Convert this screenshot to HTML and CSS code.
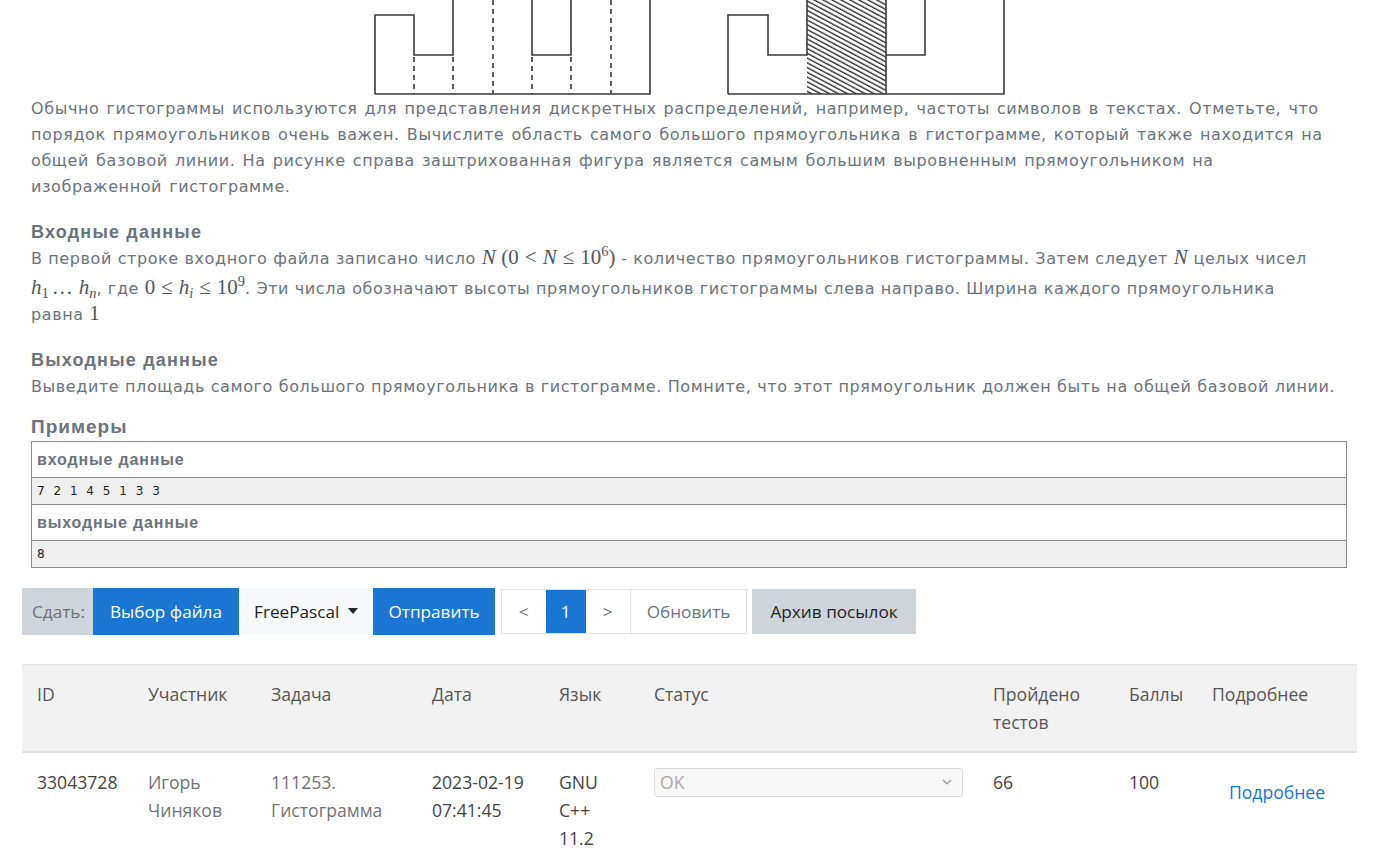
FILE: index.html
```html
<!DOCTYPE html>
<html lang="ru">
<head>
<meta charset="utf-8">
<title>Гистограмма</title>
<link rel="stylesheet" href="styles.css">
</head>
<body>
<div class="page">
  <div class="statement">
    <div class="figure">
      <svg width="640" height="96" viewBox="0 0 640 96" xmlns="http://www.w3.org/2000/svg">
        <defs>
          <pattern id="hatch" width="8" height="4.2" patternUnits="userSpaceOnUse" patternTransform="rotate(28)">
            <line x1="0" y1="1" x2="8" y2="1" stroke="#222" stroke-width="1.3"/>
          </pattern>
        </defs>
        <g fill="none" stroke="#3a3a3a" stroke-width="1.6">
          <path d="M6 94 V15 H45 V55 H84 V0"/>
          <path d="M163 0 V55 H202 V0"/>
          <path d="M281 0 V94 H6"/>
          <g stroke-dasharray="5 4">
            <path d="M45 57 V94"/>
            <path d="M84 57 V94"/>
            <path d="M124 0 V94"/>
            <path d="M163 57 V94"/>
            <path d="M202 57 V94"/>
            <path d="M242 0 V94"/>
          </g>
        </g>
        <rect x="438" y="0" width="79" height="94" fill="url(#hatch)"/>
        <g fill="none" stroke="#3a3a3a" stroke-width="1.6">
          <path d="M359 94 V15 H399 V55 H438 V0"/>
          <path d="M517 94 V0"/>
          <path d="M517 55 H556 V0"/>
          <path d="M635 0 V94 H359"/>
        </g>
      </svg>
    </div>

    <p class="legend">Обычно гистограммы используются для представления дискретных распределений, например, частоты символов в текстах. Отметьте, что порядок прямоугольников очень важен. Вычислите область самого большого прямоугольника в гистограмме, который также находится на общей базовой линии. На рисунке справа заштрихованная фигура является самым большим выровненным прямоугольником на изображенной гистограмме.</p>

    <h3 class="sec-title">Входные данные</h3>
    <p class="sec-text">В первой строке входного файла записано число <span class="m"><i>N</i></span> <span class="m">(0<span class="rel">&lt;</span><i>N</i><span class="rel">≤</span>10<sup>6</sup>)</span> - количество прямоугольников гистограммы. Затем следует <span class="m"><i>N</i></span> целых чисел <span class="m tall"><i>h</i><sub>1</sub><span class="dots">…</span><i>h</i><sub><i>n</i></sub></span>, где <span class="m">0<span class="rel">≤</span><i>h</i><sub><i>i</i></sub><span class="rel">≤</span>10<sup>9</sup></span>. Эти числа обозначают высоты прямоугольников гистограммы слева направо. Ширина каждого прямоугольника равна&nbsp;<span class="m">1</span></p>

    <h3 class="sec-title">Выходные данные</h3>
    <p class="sec-text">Выведите площадь самого большого прямоугольника в гистограмме. Помните, что этот прямоугольник должен быть на общей базовой линии.</p>

    <h3 class="examples-title">Примеры</h3>
    <div class="sample">
      <div class="sample-head">входные данные</div>
      <div class="sample-data">7 2 1 4 5 1 3 3</div>
      <div class="sample-head">выходные данные</div>
      <div class="sample-data last">8</div>
    </div>
  </div>

  <div class="submit-bar">
    <span class="bar-label">Сдать:</span>
    <span class="btn btn-blue btn-file">Выбор файла</span>
    <span class="btn btn-light">FreePascal <span class="caret"></span></span>
    <span class="btn btn-blue">Отправить</span>
    <div class="pager">
      <span class="pg">&lt;</span>
      <span class="pg pg-active">1</span>
      <span class="pg">&gt;</span>
      <span class="pg pg-refresh">Обновить</span>
    </div>
    <span class="btn btn-grey">Архив посылок</span>
  </div>

  <table class="runs">
    <colgroup>
      <col class="c-id"><col class="c-user"><col class="c-task"><col class="c-date"><col class="c-lang"><col class="c-status"><col class="c-tests"><col class="c-score"><col class="c-more">
    </colgroup>
    <thead>
      <tr>
        <th>ID</th>
        <th>Участник</th>
        <th>Задача</th>
        <th>Дата</th>
        <th>Язык</th>
        <th>Статус</th>
        <th>Пройдено тестов</th>
        <th>Баллы</th>
        <th>Подробнее</th>
      </tr>
    </thead>
    <tbody>
      <tr>
        <td>33043728</td>
        <td class="muted">Игорь Чиняков</td>
        <td class="muted">111253. Гистограмма</td>
        <td>2023-02-19 07:41:45</td>
        <td>GNU C++ 11.2</td>
        <td>
          <div class="status-select">
            <span>OK</span>
            <svg width="10" height="6" viewBox="0 0 10 6"><path d="M1 1 L5 5 L9 1" fill="none" stroke="#999" stroke-width="1.2"/></svg>
          </div>
        </td>
        <td>66</td>
        <td>100</td>
        <td class="more"><a href="#">Подробнее</a></td>
      </tr>
    </tbody>
  </table>
</div>
</body>
</html>
```

FILE: styles.css
```css
* { box-sizing: border-box; }

body {
  margin: 0;
  background: #fff;
}

.page {
  padding: 0 19px 40px 22px;
}

.statement {
  padding: 0 10px 0 9px;
}

.figure {
  display: flex;
  justify-content: center;
  height: 96px;
}

.figure svg {
  display: block;
}

.legend,
.sec-text {
  margin: 0;
  font-family: "DejaVu Sans", Verdana, sans-serif;
  font-size: 16px;
  line-height: 26px;
  letter-spacing: 0.6px;
  color: #6c737b;
}

.legend {
  word-spacing: 1.4px;
}

.m {
  font-family: "Liberation Serif", "DejaVu Serif", serif;
  font-size: 21px;
  line-height: 0;
  letter-spacing: 0;
  white-space: nowrap;
  color: #4f565e;
}

.m i {
  font-style: italic;
}

.m .rel {
  margin: 0 6px;
}

.m .dots {
  margin: 0 4px 0 3px;
  letter-spacing: 2px;
}

.m sup {
  font-size: 14.5px;
  vertical-align: 8px;
  line-height: 0;
}

.m sub {
  font-size: 14.5px;
  vertical-align: -4px;
  line-height: 0;
}

.m.tall {
  display: inline-block;
  line-height: 26px;
  padding-top: 1.5px;
}

.sec-title {
  margin: 21px 0 3px;
  font-family: "Liberation Sans", Arial, sans-serif;
  font-size: 18px;
  line-height: 22px;
  letter-spacing: 1.2px;
  font-weight: bold;
  color: #6c737b;
}

.examples-title {
  margin: 15px 0 2px;
  font-family: "Liberation Sans", Arial, sans-serif;
  font-size: 19px;
  line-height: 24px;
  letter-spacing: 1px;
  font-weight: bold;
  color: #6c737b;
}

.sample {
  border: 1px solid #8c8c8c;
}

.sample-head {
  height: 36px;
  padding: 0 5px;
  line-height: 35px;
  font-family: "Liberation Sans", Arial, sans-serif;
  font-size: 16px;
  letter-spacing: 0.85px;
  font-weight: bold;
  color: #6c737b;
  border-bottom: 1px solid #8c8c8c;
  background: #fff;
}

.sample-data {
  height: 27px;
  padding: 0 5px;
  line-height: 26px;
  font-family: "DejaVu Sans", Verdana, sans-serif;
  font-size: 12px;
  word-spacing: 5px;
  color: #222;
  background: #efefef;
  border-bottom: 1px solid #8c8c8c;
}

.sample-data.last {
  height: 26px;
  border-bottom: none;
}

/* submit bar */
.submit-bar {
  display: flex;
  align-items: center;
  margin-top: 20px;
  height: 47px;
  font-family: "Open Sans", "Noto Sans", sans-serif;
  font-size: 17.2px;
}

.bar-label {
  display: flex;
  align-items: center;
  height: 47px;
  padding: 0 8px 0 10px;
  background: #ced4da;
  color: #6c757d;
}

.btn {
  display: flex;
  align-items: center;
  height: 47px;
  padding: 0 15px;
  white-space: nowrap;
}

.btn-file {
  padding: 0 17px;
}

.btn-blue {
  background: #1976d2;
  color: #fff;
}

.btn-light {
  background: #f8f9fa;
  color: #212529;
}

.caret {
  display: inline-block;
  margin-left: 9px;
  border-top: 6px solid #212529;
  border-left: 5px solid transparent;
  border-right: 5px solid transparent;
}

.pager {
  display: flex;
  height: 45px;
  margin-left: 6px;
  border: 1px solid #dee2e6;
}

.pg {
  display: flex;
  align-items: center;
  justify-content: center;
  width: 44px;
  color: #6c757d;
  background: #fff;
}

.pg-active {
  width: 40px;
  background: #1976d2;
  color: #fff;
}

.pg-refresh {
  width: auto;
  padding: 0 16px;
  border-left: 1px solid #dee2e6;
}

.btn-grey {
  height: 45px;
  margin-left: 5px;
  padding: 0 18px;
  background: #ced4da;
  color: #212529;
}

/* runs table */
.runs {
  width: 100%;
  margin-top: 29px;
  border-collapse: collapse;
  table-layout: fixed;
  font-family: "Open Sans", "Noto Sans", sans-serif;
  font-size: 17.6px;
  line-height: 28px;
  color: #444;
}

.c-id { width: 111px; }
.c-user { width: 123px; }
.c-task { width: 161px; }
.c-date { width: 127px; }
.c-lang { width: 95px; }
.c-status { width: 339px; }
.c-tests { width: 136px; }
.c-score { width: 83px; }
.c-more { width: 160px; }

.runs th {
  padding: 15px 15px;
  text-align: left;
  vertical-align: top;
  font-weight: normal;
  color: #555;
  background: #f2f2f2;
  border-top: 1px solid #e4e4e4;
  border-bottom: 2px solid #e2e2e2;
}

.runs td {
  padding: 15px 15px;
  vertical-align: top;
  text-align: left;
}

.runs td.muted {
  color: #737373;
}

.status-select {
  display: flex;
  align-items: center;
  justify-content: space-between;
  width: 309px;
  height: 29px;
  padding: 0 10px 0 5px;
  background: #f8f8f8;
  border: 1px solid #dcdcdc;
  border-radius: 3px;
  color: #aaa;
}

.runs td.more {
  text-align: center;
  padding-top: 25px;
}

.more a {
  color: #1976d2;
  text-decoration: none;
}
```
